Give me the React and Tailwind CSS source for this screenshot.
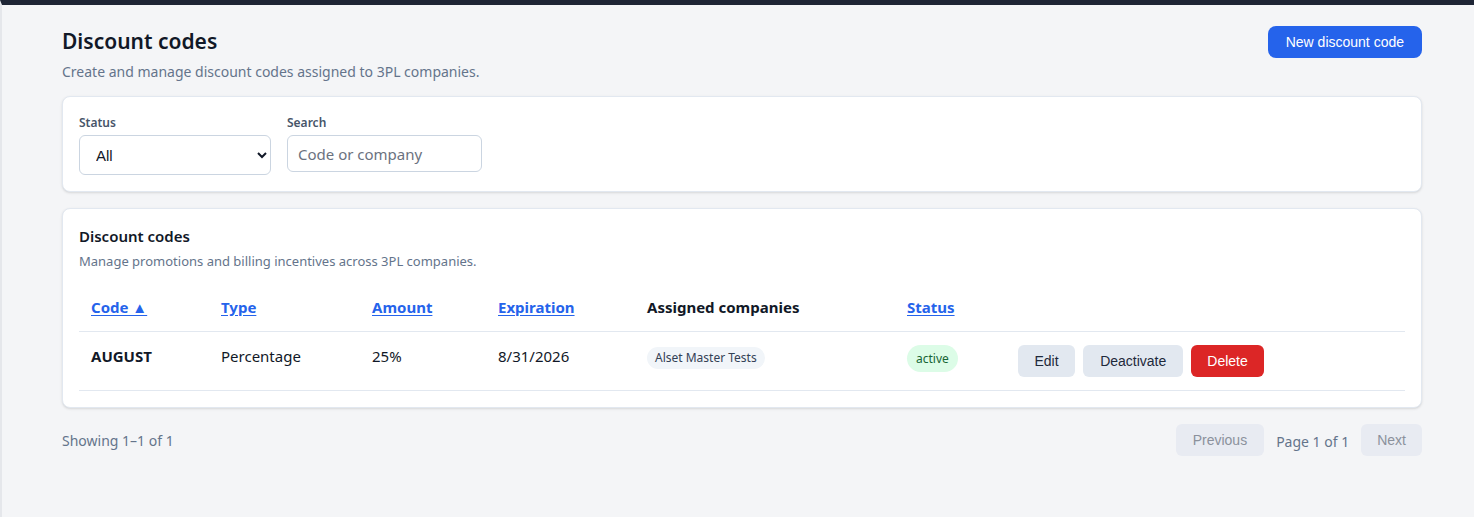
import React, { useState } from "react";

const codes = [
  {
    id: 1,
    code: "AUGUST",
    type: "Percentage",
    amount: "25%",
    expiration: "8/31/2026",
    companies: ["Alset Master Tests"],
    status: "active",
  },
];

const arial = { fontFamily: '"Liberation Sans", Arial, sans-serif' };

const SortLink = ({ children }) => (
  <button className="font-bold text-[15px] text-[#2563eb] underline underline-offset-2">
    {children}
  </button>
);

const DiscountCodes = () => {
  const [status, setStatus] = useState("all");
  const [search, setSearch] = useState("");

  return (
    <div
      className="min-h-[517px] bg-[#f4f5f7] border-t-[5px] border-[#1e2535] border-l-2 border-l-[#e5e7eb] pl-[60px] pr-[52px] pt-[19px] pb-10 text-[#111827]"
      style={{ fontFamily: '"Segoe UI", "Noto Sans", sans-serif' }}
    >
      <div className="flex items-start justify-between">
        <div>
          <h1 className="text-[21px] font-semibold leading-8 mt-[1px]">Discount codes</h1>
          <p className="text-[14px] text-[#64748b] mt-[4px]">
            Create and manage discount codes assigned to 3PL companies.
          </p>
        </div>
        <button className="mt-[2px] h-8 px-[18px] rounded-lg bg-[#2563eb] text-white text-[14px]" style={arial}>
          New discount code
        </button>
      </div>

      <div className="mt-[14px] bg-white border border-[#e2e8f0] rounded-lg shadow-sm px-4 pt-[17px] pb-4 flex gap-4">
        <div>
          <label className="block text-[12px] font-semibold text-[#475569] mb-[3px]">Status</label>
          <select
            value={status}
            onChange={(e) => setStatus(e.target.value)}
            className="w-[192px] h-10 px-3 border border-[#cbd5e1] rounded-md bg-white text-[15px]"
            style={arial}
          >
            <option value="all">All</option>
            <option value="active">Active</option>
            <option value="inactive">Inactive</option>
          </select>
        </div>
        <div>
          <label className="block text-[12px] font-semibold text-[#475569] mb-[3px]">Search</label>
          <input
            value={search}
            onChange={(e) => setSearch(e.target.value)}
            placeholder="Code or company"
            className="w-[195px] h-[37px] px-[10px] border border-[#cbd5e1] rounded-md text-[15px] placeholder:text-[#6b7280] outline-none"
          />
        </div>
      </div>

      <div className="mt-4 bg-white border border-[#e2e8f0] rounded-lg shadow-sm p-4">
        <h2 className="text-[15px] font-semibold leading-5 mt-[1px]">Discount codes</h2>
        <p className="text-[13px] text-[#64748b] mt-[6px]">
          Manage promotions and billing incentives across 3PL companies.
        </p>

        <table className="w-full mt-[24px] text-[15px]">
          <thead>
            <tr className="border-b border-[#e2e8f0] text-left">
              <th className="w-[130px] px-3 pb-[13px] font-normal"><SortLink>Code ▲</SortLink></th>
              <th className="w-[151px] px-3 pb-[13px] font-normal"><SortLink>Type</SortLink></th>
              <th className="w-[126px] px-3 pb-[13px] font-normal"><SortLink>Amount</SortLink></th>
              <th className="w-[149px] px-3 pb-[13px] font-normal"><SortLink>Expiration</SortLink></th>
              <th className="w-[260px] px-3 pb-[13px] font-bold">Assigned companies</th>
              <th className="w-[111px] px-3 pb-[13px] font-normal"><SortLink>Status</SortLink></th>
              <th className="px-3 pb-[13px]"></th>
            </tr>
          </thead>
          <tbody>
            {codes.map((c) => (
              <tr key={c.id} className="border-b border-[#e2e8f0] align-top leading-[22px]">
                <td className="px-3 py-[13px] font-bold">{c.code}</td>
                <td className="px-3 py-[13px]">{c.type}</td>
                <td className="px-3 py-[13px]">{c.amount}</td>
                <td className="px-3 py-[13px]">{c.expiration}</td>
                <td className="px-3 py-[13px]">
                  {c.companies.map((name) => (
                    <span
                      key={name}
                      className="inline-block mt-[1px] rounded-full bg-[#f1f5f9] px-2 text-[12px] leading-[22px] text-[#334155]"
                    >
                      {name}
                    </span>
                  ))}
                </td>
                <td className="px-3 py-[13px]">
                  <span className="inline-block rounded-full bg-[#dcfce7] px-[9px] text-[12px] leading-[27px] text-[#166534]">
                    {c.status}
                  </span>
                </td>
                <td className="px-3 py-[13px]">
                  <div className="flex gap-2 text-[14px]" style={arial}>
                    <button className="h-8 px-[16.5px] rounded-md bg-[#e2e8f0] text-[#1e293b]">Edit</button>
                    <button className="h-8 px-[17px] rounded-md bg-[#e2e8f0] text-[#1e293b]">Deactivate</button>
                    <button className="h-8 px-[16px] rounded-md bg-[#dc2626] text-white">Delete</button>
                  </div>
                </td>
              </tr>
            ))}
          </tbody>
        </table>
      </div>

      <div className="mt-4 flex items-center justify-between">
        <span className="text-[14px] text-[#64748b]">Showing 1–1 of 1</span>
        <div className="flex items-center gap-3 text-[14px]">
          <button disabled className="h-8 px-[17px] rounded-md bg-[#e8ebf2] text-[#8b919c]" style={arial}>
            Previous
          </button>
          <span className="text-[#64748b] translate-y-[1px]">Page 1 of 1</span>
          <button disabled className="h-8 px-4 rounded-md bg-[#e8ebf2] text-[#8b919c]" style={arial}>
            Next
          </button>
        </div>
      </div>
    </div>
  );
};

export default function App() {
  return <DiscountCodes />;
}
